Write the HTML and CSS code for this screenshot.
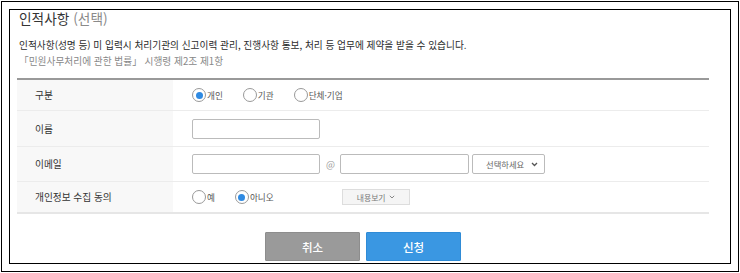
FILE: index.html
```html
<!DOCTYPE html>
<html lang="ko">
<head>
  <meta charset="UTF-8">
  <title>인적사항</title>
  <link rel="stylesheet" href="styles.css">
</head>
<body>
  <div class="frame">
    <section class="box">
      <h2 class="title">인적사항 <span>(선택)</span></h2>
      <div class="desc">
        <p>인적사항(성명 등) 미 입력시 처리기관의 신고이력 관리, 진행사항 통보, 처리 등 업무에 제약을 받을 수 있습니다.</p>
        <p class="law">「민원사무처리에 관한 법률」 시행령 제2조 제1항</p>
      </div>

      <div class="form">
        <div class="row r1">
          <div class="label">구분</div>
          <div class="field">
            <label class="radio"><input type="radio" name="type" checked><span>개인</span></label>
            <label class="radio"><input type="radio" name="type"><span>기관</span></label>
            <label class="radio"><input type="radio" name="type"><span>단체·기업</span></label>
          </div>
        </div>
        <div class="row r2">
          <div class="label">이름</div>
          <div class="field"><input type="text" class="txt"></div>
        </div>
        <div class="row r3">
          <div class="label">이메일</div>
          <div class="field">
            <input type="text" class="txt">
            <span class="at">@</span>
            <input type="text" class="txt txt2">
            <div class="select">
              <span>선택하세요</span>
              <svg width="7" height="5" viewBox="0 0 7 5"><path d="M1 1l2.5 2.5L6 1" fill="none" stroke="#555" stroke-width="1.3"/></svg>
            </div>
          </div>
        </div>
        <div class="row r4">
          <div class="label">개인정보 수집 동의</div>
          <div class="field">
            <label class="radio"><input type="radio" name="agree"><span>예</span></label>
            <label class="radio"><input type="radio" name="agree" checked><span>아니오</span></label>
            <button class="more">내용보기
              <svg width="6" height="4" viewBox="0 0 6 4"><path d="M0.8 0.8l2.2 2.2 2.2-2.2" fill="none" stroke="#888" stroke-width="1"/></svg>
            </button>
          </div>
        </div>
      </div>

      <div class="actions">
        <button class="btn cancel">취소</button>
        <button class="btn submit">신청</button>
      </div>
    </section>
  </div>
</body>
</html>
```

FILE: styles.css
```css
* { box-sizing: border-box; margin: 0; padding: 0; }
body {
  font-family: "Noto Sans CJK KR", "Noto Sans", sans-serif;
  color: #333;
  background: #fff;
}
.frame {
  margin: 1px;
  width: 738px;
  height: 271px;
  border: 1px solid #000;
  padding: 7px;
}
.box {
  border: 1px solid #000;
  height: 255px;
  padding: 0 21px 0 7px;
}
.title {
  font-size: 13.7px;
  font-weight: 400;
  line-height: 16px;
  padding-left: 2px;
  color: #333;
}
.title span { color: #8a8a8a; }

.desc {
  margin-top: 11px;
  padding-left: 2px;
  font-size: 9.7px;
  line-height: 16px;
  color: #2b2b2b;
}
.desc .law { color: #888; }

/* form table */
.form {
  margin-top: 9px;
  border-top: 2px solid #999;
  border-bottom: 2px solid #e6e6e6;
}
.row {
  display: flex;
  border-bottom: 1px solid #ececec;
}
.row:last-child { border-bottom: none; }
.r1 { height: 31px; }
.r2 { height: 36px; }
.r3 { height: 35px; }
.r4 { height: 30px; }
.label {
  width: 156px;
  background: #f8f8f8;
  padding-left: 18px;
  font-size: 9.7px;
  display: flex;
  align-items: center;
}
.field {
  flex: 1;
  display: flex;
  align-items: center;
  padding-left: 19px;
  font-size: 8.6px;
}
.radio {
  display: flex;
  align-items: center;
  gap: 1px;
  margin-right: 20px;
  color: #555;
}
.radio input {
  appearance: none;
  width: 14px; height: 14px;
  border: 1px solid #999;
  border-radius: 50%;
  display: grid;
  place-items: center;
  background: #fff;
}
.radio input:checked::after {
  content: "";
  width: 7px; height: 7px;
  border-radius: 50%;
  background: #2f8ae2;
}
.txt {
  width: 128px;
  height: 20px;
  border: 1px solid #bbb;
  border-radius: 2px;
  background: #fff;
}
.at {
  color: #999;
  font-size: 9.5px;
  margin: 0 5px 0 6px;
}
.txt2 { width: 129px; }
.select {
  margin-left: 3px;
  width: 73px;
  height: 20px;
  border: 1px solid #bbb;
  border-radius: 2px;
  display: flex;
  align-items: center;
  justify-content: space-between;
  padding: 0 6px 0 13px;
  color: #666;
  font-size: 8.3px;
}
.more {
  margin-left: 48px;
  width: 68px;
  height: 16px;
  border: 1px solid #ddd;
  background: #f5f5f5;
  color: #777;
  font-family: inherit;
  font-size: 7.8px;
  display: flex;
  align-items: center;
  justify-content: center;
  gap: 3px;
}

.actions {
  margin-top: 18px;
  display: flex;
  justify-content: center;
  gap: 6px;
}
.btn {
  width: 95px;
  height: 29px;
  border: 1px solid;
  border-radius: 1px;
  color: #fff;
  font-family: inherit;
  font-size: 11.5px;
  font-weight: 500;
}
.cancel { background: #9a9a9a; border-color: #8d8d8d; }
.submit { background: #3a97e2; border-color: #2f8bd6; }
```
